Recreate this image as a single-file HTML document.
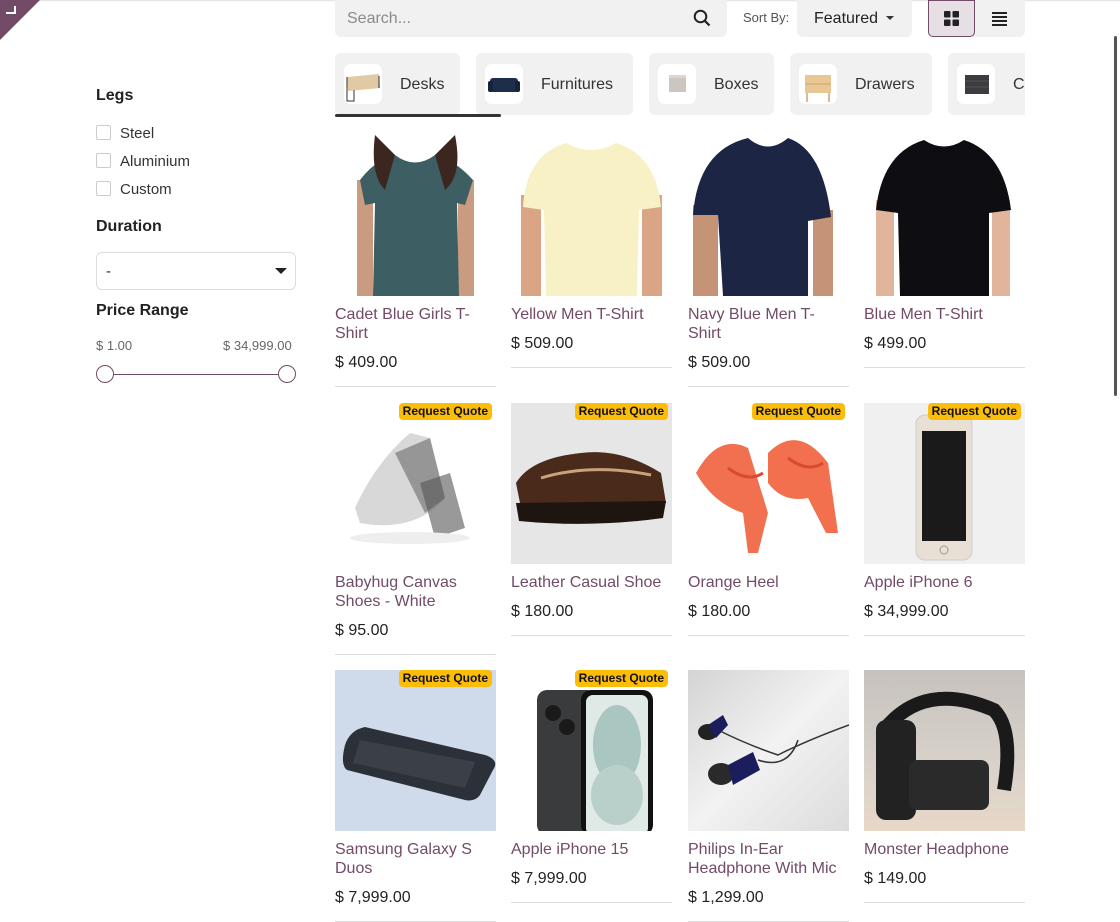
<!DOCTYPE html>
<html><head><meta charset="utf-8"><style>
*{box-sizing:border-box;margin:0;padding:0}
body{width:1120px;height:880px;overflow:hidden;background:#fff;font-family:"Liberation Sans","DejaVu Sans",sans-serif;color:#212529;position:relative}
.abs{position:absolute}
.card{position:absolute;width:161px}
.img{width:161px;height:161px;position:relative;overflow:hidden}
.img svg{display:block}
.name{margin-top:9px;color:#714b67;font-size:16px;line-height:19px}
.price{margin-top:10px;font-size:16px;line-height:20px;color:#222}
.bd{margin-top:13px;border-top:1px solid #dcdcdc}
.badge{position:absolute;right:4px;top:0;background:#fbbd08;color:#111;font-size:12px;font-weight:bold;padding:1px 4px;border-radius:4px;line-height:15px;z-index:2}
.cat{position:absolute;top:53px;height:62px;background:#f1f1f1;border-radius:6px;font-size:16px;color:#333}
.cat .ic{position:absolute;left:9px;top:11px;width:38px;height:40px;background:#fff;border-radius:7px;overflow:hidden}
.cat span{position:absolute;top:22px;line-height:20px}
.cb{position:absolute;left:96px;width:15px;height:15px;border:1px solid #ccc;border-radius:2px;background:#fff}
.lab{position:absolute;left:120px;font-size:15px;color:#333}
.h{position:absolute;left:96px;font-size:16px;font-weight:bold;color:#222}
</style></head><body>
<div class="abs" style="left:0;top:0;width:1120px;height:2px;background:linear-gradient(#ddd,#fff)"></div>
<svg class="abs" style="left:0;top:0" width="40" height="40"><polygon points="0,0 40,0 0,40" fill="#714b67"/><path d="M15 6 V13 H6" stroke="#fff" stroke-width="2" fill="none"/></svg>

<div class="abs" style="left:335px;top:0;width:392px;height:37px;background:#f1f1f1;border-radius:0 0 6px 6px"></div>
<div class="abs" style="left:347px;top:10px;font-size:16px;color:#8a8a8a">Search...</div>
<svg class="abs" style="left:693px;top:9px" width="18" height="18"><circle cx="7.5" cy="7.5" r="5.8" stroke="#222" stroke-width="2" fill="none"/><path d="M11.8 11.8 L16.5 16.5" stroke="#222" stroke-width="2.2"/></svg>
<div class="abs" style="left:743px;top:10px;font-size:13px;color:#555">Sort By:</div>
<div class="abs" style="left:797px;top:0;width:115px;height:37px;background:#f1f1f1;border-radius:0 0 6px 6px"></div>
<div class="abs" style="left:814px;top:10px;font-size:16px;color:#222">Featured</div>
<svg class="abs" style="left:886px;top:16px" width="8" height="5"><polygon points="0,0 8,0 4,4" fill="#333"/></svg>
<div class="abs" style="left:928px;top:0;width:97px;height:37px;background:#f1f1f1;border-radius:0 0 6px 6px"></div>
<div class="abs" style="left:928px;top:0;width:47px;height:37px;background:#e6dfe4;border:1px solid #714b67;border-radius:0 0 5px 5px"></div>
<svg class="abs" style="left:944px;top:11px" width="16" height="16"><rect x="0" y="0" width="6.5" height="6.5" rx="1" fill="#222"/><rect x="8.5" y="0" width="6.5" height="6.5" rx="1" fill="#222"/><rect x="0" y="8.5" width="6.5" height="6.5" rx="1" fill="#222"/><rect x="8.5" y="8.5" width="6.5" height="6.5" rx="1" fill="#222"/></svg>
<svg class="abs" style="left:992px;top:12px" width="16" height="14"><rect y="0" width="15" height="2" fill="#222"/><rect y="4" width="15" height="2" fill="#222"/><rect y="8" width="15" height="2" fill="#222"/><rect y="12" width="15" height="2" fill="#222"/></svg>

<div class="abs" style="left:335px;top:53px;width:690px;height:64px;overflow:hidden">
<div class="cat" style="left:0;top:0;width:125px"><div class="ic"><svg width="38" height="40"><polygon points="3,13 35,10 36,24 4,27" fill="#e2c9a5"/><path d="M3 13 V37 H10 V26 M35 12 V24" stroke="#333" stroke-width="1" fill="none"/></svg></div><span style="left:65px">Desks</span></div>
<div class="cat" style="left:141px;top:0;width:157px"><div class="ic"><svg width="38" height="40"><rect x="5" y="14" width="28" height="14" rx="3" fill="#1d2e4a"/><rect x="3" y="17" width="5" height="11" rx="2" fill="#15233a"/><rect x="30" y="17" width="5" height="11" rx="2" fill="#15233a"/></svg></div><span style="left:65px">Furnitures</span></div>
<div class="cat" style="left:314px;top:0;width:125px"><div class="ic"><svg width="38" height="40"><rect x="11" y="11" width="17" height="17" fill="#cdc6c0"/><rect x="11" y="11" width="17" height="3" fill="#ddd6d0"/></svg></div><span style="left:65px">Boxes</span></div>
<div class="cat" style="left:455px;top:0;width:142px"><div class="ic"><svg width="38" height="40"><rect x="6" y="11" width="26" height="18" fill="#e8c795"/><path d="M6 20 H32" stroke="#c9a470"/><path d="M8 29 V38 M30 29 V38" stroke="#c9a470" stroke-width="1.5"/></svg></div><span style="left:65px">Drawers</span></div>
<div class="cat" style="left:613px;top:0;width:100px"><div class="ic"><svg width="38" height="40"><rect x="8" y="11" width="24" height="19" fill="#3a3c40"/><path d="M8 17 H32 M8 23 H32" stroke="#555"/></svg></div><span style="left:65px">Cabinets</span></div>
<div class="abs" style="left:0;top:61px;width:166px;height:3px;background:#333;border-radius:2px"></div>
</div>

<div class="h" style="top:87px">Legs</div>
<div class="cb" style="top:125px"></div><div class="lab" style="top:125px">Steel</div>
<div class="cb" style="top:153px"></div><div class="lab" style="top:153px">Aluminium</div>
<div class="cb" style="top:181px"></div><div class="lab" style="top:181px">Custom</div>
<div class="h" style="top:218px">Duration</div>
<div class="abs" style="left:96px;top:252px;width:200px;height:38px;border:1px solid #dcdcdc;border-radius:6px"></div>
<div class="abs" style="left:106px;top:263px;font-size:15px">-</div>
<svg class="abs" style="left:275px;top:268px" width="12" height="7"><polygon points="0,0 12,0 6,6" fill="#222"/></svg>
<div class="h" style="top:302px">Price Range</div>
<div class="abs" style="left:96px;top:338px;font-size:13px;color:#666">$ 1.00</div>
<div class="abs" style="left:223px;top:338px;font-size:13px;color:#666">$ 34,999.00</div>
<div class="abs" style="left:105px;top:374px;width:182px;height:1px;background:#714b67"></div>
<div class="abs" style="left:96px;top:365px;width:18px;height:18px;border:1.5px solid #714b67;border-radius:50%;background:#fff"></div>
<div class="abs" style="left:278px;top:365px;width:18px;height:18px;border:1.5px solid #714b67;border-radius:50%;background:#fff"></div>

<div class="abs" style="left:1114px;top:36px;width:3px;height:360px;background:#555;border-radius:2px"></div>

<div class="card" style="left:335px;top:135px"><div class="img"><svg width="161" height="161"><rect x="22" y="45" width="16" height="116" fill="#c99c82"/><rect x="123" y="45" width="16" height="116" fill="#c99c82"/><path d="M25 45 Q40 25 60 20 Q80 35 100 20 Q120 25 138 45 L130 70 L122 68 L124 161 L38 161 L40 68 L30 70 Z" fill="#3d5f63"/><path d="M40 0 Q35 40 50 55 L60 20 Z M120 0 Q128 40 110 55 L100 20 Z" fill="#3b2620"/></svg></div><div class="name">Cadet Blue Girls T-<br>Shirt</div><div class="price">$ 409.00</div><div class="bd"></div></div>
<div class="card" style="left:511px;top:135px"><div class="img"><svg width="161" height="161"><rect x="10" y="60" width="20" height="101" fill="#d9a585"/><rect x="131" y="60" width="20" height="101" fill="#d9a585"/><path d="M12 72 Q15 20 55 8 Q80 22 105 8 Q145 20 150 72 L128 75 L126 161 L35 161 L33 75 Z" fill="#f8f1c6"/></svg></div><div class="name">Yellow Men T-Shirt</div><div class="price">$ 509.00</div><div class="bd"></div></div>
<div class="card" style="left:688px;top:135px"><div class="img"><svg width="161" height="161"><rect x="5" y="70" width="25" height="91" fill="#c59376"/><rect x="125" y="75" width="20" height="86" fill="#c59376"/><path d="M5 80 Q10 15 60 3 Q80 20 100 3 Q135 15 143 82 L120 86 L120 161 L35 161 L30 80 Z" fill="#1c2544"/></svg></div><div class="name">Navy Blue Men T-<br>Shirt</div><div class="price">$ 509.00</div><div class="bd"></div></div>
<div class="card" style="left:864px;top:135px"><div class="img"><svg width="161" height="161"><rect x="12" y="65" width="18" height="96" fill="#e0b59c"/><rect x="128" y="65" width="18" height="96" fill="#e0b59c"/><path d="M12 75 Q18 18 60 5 Q80 18 100 5 Q140 18 147 75 L125 78 L125 161 L36 161 L34 78 Z" fill="#0e0e12"/></svg></div><div class="name">Blue Men T-Shirt</div><div class="price">$ 499.00</div><div class="bd"></div></div>

<div class="card" style="left:335px;top:403px"><div class="badge">Request Quote</div><div class="img"><svg width="161" height="161"><path d="M20 105 Q40 60 75 30 L95 35 L110 95 Q80 130 25 120 Z" fill="#d8d8d8"/><path d="M60 50 L95 35 L110 95 L90 110 Z" fill="#7b7b7b" opacity=".7"/><path d="M85 80 L115 70 L130 125 L100 135 Z" fill="#555" opacity=".6"/><ellipse cx="75" cy="135" rx="60" ry="6" fill="#eee"/></svg></div><div class="name">Babyhug Canvas<br>Shoes - White</div><div class="price">$ 95.00</div><div class="bd"></div></div>
<div class="card" style="left:511px;top:403px"><div class="badge">Request Quote</div><div class="img" style="background:#e6e6e6"><svg width="161" height="161"><path d="M5 80 Q20 55 70 50 Q110 45 150 70 L155 100 Q100 110 10 105 Z" fill="#4a2a1a"/><path d="M5 100 L155 98 L152 115 Q80 125 8 118 Z" fill="#1e1410"/><path d="M30 75 Q80 60 140 72" stroke="#c9a27a" stroke-width="3" fill="none"/></svg></div><div class="name">Leather Casual Shoe</div><div class="price">$ 180.00</div><div class="bd"></div></div>
<div class="card" style="left:688px;top:403px"><div class="badge">Request Quote</div><div class="img"><svg width="161" height="161"><path d="M8 70 Q30 30 60 45 L80 110 L70 150 L60 150 L55 110 Q25 100 8 70 Z" fill="#f07050"/><path d="M80 50 Q110 20 140 60 L150 130 L138 130 L120 95 Q95 100 80 80 Z" fill="#f3704f"/><path d="M40 65 Q60 80 75 70 M100 55 Q120 70 135 60" stroke="#d94a30" stroke-width="3" fill="none"/></svg></div><div class="name">Orange Heel</div><div class="price">$ 180.00</div><div class="bd"></div></div>
<div class="card" style="left:864px;top:403px"><div class="badge">Request Quote</div><div class="img" style="background:#f0f0f0"><svg width="161" height="161"><rect x="52" y="12" width="56" height="145" rx="9" fill="#e8e0d4" stroke="#ccc"/><rect x="58" y="28" width="44" height="110" fill="#1a1a1a"/><circle cx="80" cy="147" r="4" fill="none" stroke="#999"/></svg></div><div class="name">Apple iPhone 6</div><div class="price">$ 34,999.00</div><div class="bd"></div></div>

<div class="card" style="left:335px;top:670px"><div class="badge">Request Quote</div><div class="img" style="background:#cfdbea"><svg width="161" height="161"><path d="M10 75 Q15 60 30 57 L150 85 Q165 90 158 100 L145 125 Q140 132 130 130 L12 100 Q5 95 10 75 Z" fill="#2c3038"/><path d="M25 70 L140 92 L130 118 L18 93 Z" fill="#3b3f48"/></svg></div><div class="name">Samsung Galaxy S<br>Duos</div><div class="price">$ 7,999.00</div><div class="bd"></div></div>
<div class="card" style="left:511px;top:670px"><div class="badge">Request Quote</div><div class="img"><svg width="161" height="161"><rect x="26" y="20" width="60" height="145" rx="10" fill="#3a3b3d"/><circle cx="42" cy="43" r="8" fill="#1a1a1a"/><circle cx="56" cy="57" r="8" fill="#1a1a1a"/><rect x="70" y="20" width="72" height="145" rx="10" fill="#111"/><rect x="75" y="25" width="62" height="140" rx="7" fill="#dfe9e6"/><ellipse cx="106" cy="75" rx="24" ry="40" fill="#aac6c0"/><ellipse cx="106" cy="125" rx="26" ry="30" fill="#b9cfca"/></svg></div><div class="name">Apple iPhone 15</div><div class="price">$ 7,999.00</div><div class="bd"></div></div>
<div class="card" style="left:688px;top:670px"><div class="img" style="background:linear-gradient(135deg,#d4d4d4,#f2f2f2 50%,#dcdcdc)"><svg width="161" height="161"><path d="M30 60 Q60 75 90 85 Q120 70 161 55 M70 90 Q100 100 110 70" stroke="#333" stroke-width="1.5" fill="none"/><ellipse cx="20" cy="62" rx="10" ry="8" fill="#222"/><path d="M20 55 L35 45 L40 55 L28 68 Z" fill="#1c1d5c"/><ellipse cx="33" cy="104" rx="13" ry="11" fill="#2a2a2a"/><path d="M40 95 L65 82 L72 100 L45 115 Z" fill="#1c1d5c"/></svg></div><div class="name">Philips In-Ear<br>Headphone With Mic</div><div class="price">$ 1,299.00</div><div class="bd"></div></div>
<div class="card" style="left:864px;top:670px"><div class="img" style="background:linear-gradient(180deg,#c7c2be,#d8d2ca 60%,#e8d8c8)"><svg width="161" height="161"><path d="M20 60 Q60 10 130 40 Q150 60 140 120" stroke="#1a1a1a" stroke-width="14" fill="none"/><rect x="12" y="50" width="40" height="100" rx="10" fill="#222"/><rect x="45" y="90" width="80" height="50" rx="8" fill="#2a2a2a"/></svg></div><div class="name">Monster Headphone</div><div class="price">$ 149.00</div><div class="bd"></div></div>
</body></html>
